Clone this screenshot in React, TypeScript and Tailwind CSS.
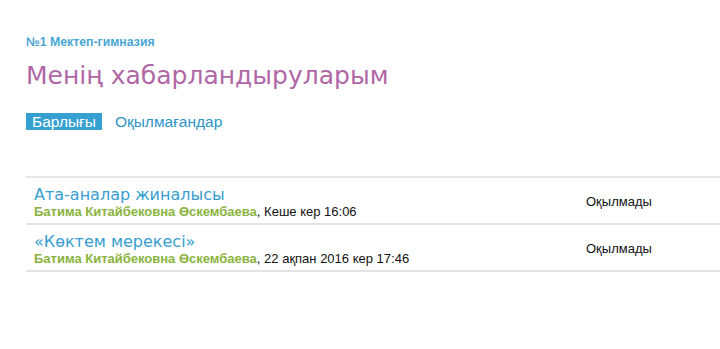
const notices = [
  { title: "Ата-аналар жиналысы", author: "Батима Китайбековна Өскембаева", date: "Кеше кер 16:06", status: "Оқылмады" },
  { title: "«Көктем мерекесі»", author: "Батима Китайбековна Өскембаева", date: "22 ақпан 2016 кер 17:46", status: "Оқылмады" },
];

export default function App() {
  return (
    <div className="w-[720px] h-[349px] overflow-hidden bg-white font-['Liberation_Sans',Arial,sans-serif]">
      <div className="pl-[26px] pt-[35px]">
        <div className="text-[12.3px] leading-[14px] font-bold text-[#4aa6d4]">№1 Мектеп-гимназия</div>
        <h1 className="mt-[9px] text-[25px] leading-[36px] text-[#b067a6] font-['DejaVu_Sans',Verdana,sans-serif]">
          Менің хабарландыруларым
        </h1>
        <div className="mt-[19px] flex items-center gap-[13px] text-[15.5px] leading-[17px]">
          <span className="bg-[#36a1d0] text-white px-[6px]">Барлығы</span>
          <span className="text-[#2f95c6]">Оқылмағандар</span>
        </div>
        <div className="mt-[46px] w-[760px] border-t-2 border-[#e6e6e6]">
          {notices.map((n, i) => (
            <div key={i} className="flex items-center border-b-2 border-[#e3e3e3] pl-[8px] pt-[7px] pb-[4px]">
              <div className="w-[552px]">
                <div className="text-[16px] leading-[19px] text-[#369ed0] font-['DejaVu_Sans',Verdana,sans-serif]">{n.title}</div>
                <div className="text-[13px] leading-[15px]">
                  <span className="font-bold text-[#8ab43e]">{n.author}</span>
                  <span className="text-[#111]">, {n.date}</span>
                </div>
              </div>
              <div className="text-[13px] text-[#111]">{n.status}</div>
            </div>
          ))}
        </div>
      </div>
    </div>
  );
}
